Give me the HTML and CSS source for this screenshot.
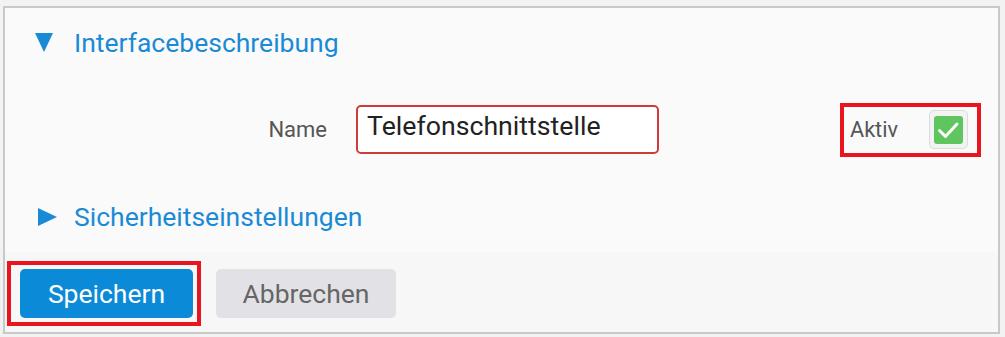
FILE: index.html
```html
<!DOCTYPE html>
<html lang="de">
<head>
<meta charset="utf-8">
<title>Interface</title>
<link rel="stylesheet" href="styles.css">
</head>
<body>
<div class="frame">
  <div class="content">
    <div class="section-head">
      <span class="caret">
        <svg width="18" height="19" viewBox="0 0 18 19"><polygon points="0,0 18,0 9,19" fill="#1a8ad6"/></svg>
      </span>
      <span class="section-title">Interfacebeschreibung</span>
    </div>
    <div class="form-row">
      <label class="field-label" for="name">Name</label>
      <input class="text-input" id="name" type="text" value="Telefonschnittstelle">
      <div class="active-group">
        <span class="active-label">Aktiv</span>
        <span class="checkbox">
          <span class="checkbox-inner">
            <svg width="29" height="28" viewBox="0 0 29 28"><polyline points="5.5,14.5 11.5,20.5 23,8" fill="none" stroke="#fff" stroke-width="3" stroke-linecap="round" stroke-linejoin="round"/></svg>
          </span>
        </span>
      </div>
    </div>
    <div class="section-head section-head-2">
      <span class="caret caret-right">
        <svg width="19" height="18" viewBox="0 0 19 18"><polygon points="0,0 19,9 0,18" fill="#1a8ad6"/></svg>
      </span>
      <span class="section-title">Sicherheitseinstellungen</span>
    </div>
  </div>
  <div class="footer">
    <button class="btn btn-primary" type="button">Speichern</button>
    <button class="btn btn-secondary" type="button">Abbrechen</button>
  </div>
</div>
</body>
</html>
```

FILE: styles.css
```css
html, body {
  margin: 0;
  padding: 0;
  background: #f2f2f2;
}
body {
  font-family: Roboto, "Liberation Sans", sans-serif;
  padding: 6px 5px 3px 3px;
}
.frame {
  border: 2px solid #c9c9c9;
  height: 324px;
  display: flex;
  flex-direction: column;
  background: #fafafa;
}
.content {
  flex: 1;
  background: #fafafa;
}
.section-head {
  display: flex;
  align-items: center;
  padding-top: 19px;
  padding-left: 30px;
  height: 31px;
}
.section-head-2 {
  padding-top: 47px;
}
.caret {
  width: 39px;
  display: flex;
  align-items: center;
  height: 31px;
}
.caret-right {
  padding-left: 3px;
  width: 36px;
}
.section-title {
  font-size: 26.5px;
  line-height: 31px;
  color: #1a8ad6;
}
.form-row {
  display: flex;
  align-items: center;
  margin-top: 47px;
  height: 49px;
  padding-right: 30px;
}
.field-label {
  width: 322px;
  text-align: right;
  font-size: 22px;
  line-height: 25px;
  color: #555;
}
.text-input {
  margin-left: 29px;
  box-sizing: border-box;
  width: 303px;
  height: 49px;
  border: 2px solid #cf3b3d;
  border-radius: 5px;
  background: #fff;
  padding: 1px 9px 8px 9px;
  font-family: Roboto, "Liberation Sans", sans-serif;
  font-size: 26.7px;
  line-height: 31px;
  color: #222;
  outline: none;
}
.active-group {
  position: relative;
  margin-left: auto;
  display: flex;
  align-items: center;
  gap: 31px;
}
.active-group::after {
  content: "";
  position: absolute;
  left: -10px;
  right: -13px;
  top: -7px;
  bottom: -8px;
  border: 4px solid #e8141f;
  pointer-events: none;
}
.active-label {
  font-size: 21.7px;
  line-height: 25px;
  color: #555;
}
.checkbox {
  box-sizing: border-box;
  width: 39px;
  height: 39px;
  border: 1px solid #dcdcdc;
  border-radius: 5px;
  background: #f3f3f3;
  display: flex;
  align-items: center;
  justify-content: center;
}
.checkbox-inner {
  width: 29px;
  height: 28px;
  border-radius: 3px;
  background: #5fc65f;
  display: flex;
  align-items: center;
  justify-content: center;
}
.footer {
  height: 80px;
  background: #f7f7f7;
  display: flex;
  align-items: flex-start;
  padding: 17px 0 0 15px;
  box-sizing: border-box;
  gap: 23px;
}
.btn {
  height: 49px;
  border: none;
  border-radius: 5px;
  font-family: Roboto, "Liberation Sans", sans-serif;
  font-size: 26.5px;
  line-height: 31px;
  padding: 0;
}
.btn-primary {
  position: relative;
  width: 173px;
  background: #0b8ad8;
  color: #fff;
}
.btn-primary::after {
  content: "";
  position: absolute;
  left: -13px;
  right: -8px;
  top: -8px;
  bottom: -8px;
  border: 4px solid #e8141f;
  pointer-events: none;
}
.btn-secondary {
  width: 180px;
  background: #e2e2e6;
  color: #666;
}
```
